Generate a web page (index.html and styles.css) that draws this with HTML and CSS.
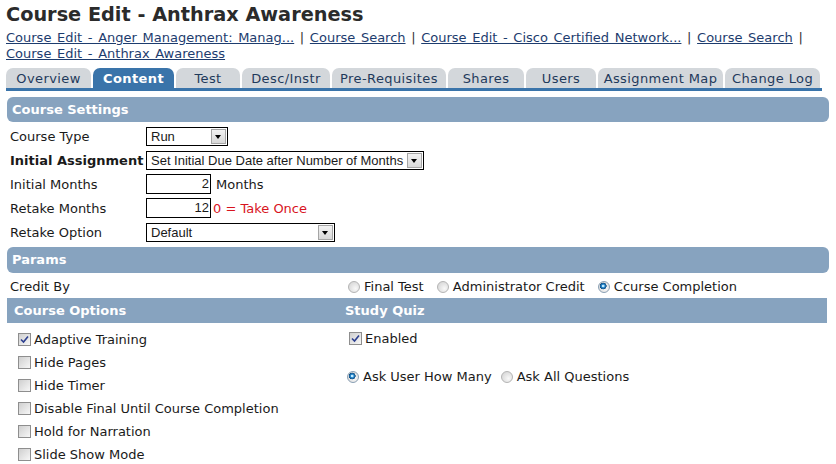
FILE: index.html
```html
<!DOCTYPE html>
<html lang="en">
<head>
  <meta charset="UTF-8" />
  <title>Course Edit - Anthrax Awareness</title>
  <link rel="stylesheet" href="styles.css">
</head>
<body>
  <div class="page">
    <h1 class="title">Course Edit - Anthrax Awareness</h1>

    <div class="crumbs">
      <a href="#">Course Edit - Anger Management: Manag...</a> |
      <a href="#">Course Search</a> |
      <a href="#">Course Edit - Cisco Certified Network...</a> |
      <a href="#">Course Search</a> |<br>
      <a href="#">Course Edit - Anthrax Awareness</a>
    </div>

    <ul class="tabs">
      <li>Overview</li>
      <li class="active">Content</li>
      <li>Test</li>
      <li>Desc/Instr</li>
      <li>Pre-Requisites</li>
      <li>Shares</li>
      <li>Users</li>
      <li>Assignment Map</li>
      <li>Change Log</li>
    </ul>

    <!-- course settings -->
    <div class="bar rounded">Course Settings</div>
    <div class="settings">
      <label>Course Type</label>
      <div class="field">
        <span class="select w-type"><span class="value">Run</span></span>
      </div>

      <label class="strong">Initial Assignment</label>
      <div class="field">
        <span class="select w-assign"><span class="value">Set Initial Due Date after Number of Months</span></span>
      </div>

      <label>Initial Months</label>
      <div class="field">
        <span class="num">2</span>
        <span class="unit">Months</span>
      </div>

      <label>Retake Months</label>
      <div class="field">
        <span class="num">12</span>
        <span class="hint">0 = Take Once</span>
      </div>

      <label>Retake Option</label>
      <div class="field">
        <span class="select w-option"><span class="value">Default</span></span>
      </div>
    </div>

    <!-- params -->
    <div class="bar rounded params-bar">Params</div>
    <div class="params">
      <div class="credit-label">Credit By</div>
      <div class="credit-opts">
        <span class="opt"><span class="radio"></span>Final Test</span>
        <span class="opt"><span class="radio"></span>Administrator Credit</span>
        <span class="opt"><span class="radio on"></span>Ccurse Completion</span>
      </div>

      <div class="bar sub left">Course Options</div>
      <div class="bar sub right">Study Quiz</div>

      <ul class="checks">
        <li><span class="check on"><svg viewBox="0 0 9 9" width="9" height="9"><path d="M1 4.5 L3.5 7 L8 1.5" fill="none" stroke="#2c3f8f" stroke-width="1.6"/></svg></span>Adaptive Training</li>
        <li><span class="check"></span>Hide Pages</li>
        <li><span class="check"></span>Hide Timer</li>
        <li><span class="check"></span>Disable Final Until Course Completion</li>
        <li><span class="check"></span>Hold for Narration</li>
        <li><span class="check"></span>Slide Show Mode</li>
      </ul>

      <div class="quiz">
        <div class="quiz-enabled"><span class="check on"><svg viewBox="0 0 9 9" width="9" height="9"><path d="M1 4.5 L3.5 7 L8 1.5" fill="none" stroke="#2c3f8f" stroke-width="1.6"/></svg></span>Enabled</div>
        <div class="quiz-mode">
          <span class="opt"><span class="radio on"></span>Ask User How Many</span>
          <span class="opt"><span class="radio"></span>Ask All Questions</span>
        </div>
      </div>
    </div>
  </div>
</body>
</html>
```

FILE: styles.css
```css
:root {
  --bar: #87a3bf;
  --tab: #d3d7db;
  --tab-active: #3a74aa;
  --link: #1d3c6e;
  --text: #1a1a1a;
}

* {
  box-sizing: border-box;
  margin: 0;
  padding: 0;
}

body {
  font-family: "DejaVu Sans", Verdana, sans-serif;
  font-size: 13px;
  color: var(--text);
  background: #fff;
}

.page {
  padding: 2px 7px 0 6px;
  width: 836px;
}

.title {
  font-size: 19.3px;
  font-weight: bold;
  color: #2b2b2b;
  line-height: 26px;
}

.crumbs {
  line-height: 16px;
  color: #333;
  margin-top: 2px;
  word-spacing: 1.5px;
}

.crumbs a {
  color: var(--link);
}

/* tabs */
.tabs {
  list-style: none;
  display: grid;
  grid-template-columns: 85px 81px 64px 88px 114px 76px 70px 125px 95px;
  gap: 2px;
  width: 816px;
  margin-top: 6px;
  border-bottom: 3px solid var(--tab-active);
}

.tabs li {
  height: 20px;
  line-height: 21px;
  text-align: center;
  background: var(--tab);
  color: #1f3a5c;
  border-radius: 7px 7px 0 0;
  letter-spacing: 0.4px;
  white-space: nowrap;
}

.tabs li.active {
  background: var(--tab-active);
  color: #fff;
  font-weight: bold;
}

/* header bars */
.bar {
  background: var(--bar);
  color: #fff;
  font-weight: bold;
  height: 25px;
  line-height: 25px;
  padding-left: 5px;
  margin-left: 1px;
}

.bar.rounded {
  border-radius: 6px;
  margin-top: 6px;
  width: 822px;
}

.params-bar {
  height: 26px;
  line-height: 26px;
  margin-top: 3px !important;
}

/* settings grid */
.settings {
  display: grid;
  grid-template-columns: 136px 1fr;
  grid-auto-rows: 24px;
  padding: 2px 0 0 4px;
}

.settings label {
  line-height: 25px;
}

.settings label.strong {
  font-weight: bold;
}

.field {
  display: flex;
  align-items: center;
}

.select {
  position: relative;
  display: inline-block;
  height: 19px;
  border: 1px solid #000;
  font-family: "Liberation Sans", Arial, sans-serif;
  font-size: 13px;
  line-height: 17px;
  background: #fff;
}

.select .value {
  padding-left: 4px;
}

.select::after {
  content: "";
  position: absolute;
  right: 1px;
  top: 1px;
  width: 15px;
  height: 15px;
  background: linear-gradient(#f2f2f2, #d8d8d8);
  border: 1px solid #a5a5a5;
  box-sizing: border-box;
}

.select::before {
  content: "";
  position: absolute;
  right: 6px;
  top: 7px;
  border-left: 3px solid transparent;
  border-right: 3px solid transparent;
  border-top: 4px solid #000;
  z-index: 1;
}

.w-type { width: 82px; }
.w-assign { width: 278px; }
.w-option { width: 189px; }

.num {
  display: inline-block;
  width: 65px;
  height: 20px;
  border: 1px solid #000;
  text-align: right;
  padding-right: 1px;
  font-family: "Liberation Sans", Arial, sans-serif;
  font-size: 13px;
  line-height: 18px;
}

.unit {
  margin-left: 5px;
}

.hint {
  margin-left: 2px;
  color: #d8141e;
}

/* params */
.params {
  display: grid;
  grid-template-columns: 333px 487px;
  margin-left: 1px;
}

.credit-label {
  height: 25px;
  line-height: 27px;
  padding-left: 3px;
}

.credit-opts {
  height: 25px;
  line-height: 27px;
  padding-left: 8px;
}

.opt {
  display: inline-flex;
  align-items: center;
  margin-right: 9px;
}

.radio {
  display: inline-block;
  width: 12px;
  height: 12px;
  border-radius: 50%;
  border: 1px solid #b4b4b4;
  background: radial-gradient(circle at 65% 65%, #f8f8f8, #d0d0d0);
  margin-right: 4px;
}

.radio.on {
  border-color: #8aa0b4;
  background:
    radial-gradient(circle at 42% 40%, #bfeaff 0 1px, #2a8ad0 1.6px, #0f4c80 3.2px, transparent 3.6px),
    radial-gradient(circle at 65% 65%, #f8f8f8, #d0d0d0);
}

.bar.sub {
  margin-left: 0;
}

.bar.sub.left {
  padding-left: 7px;
}

.bar.sub.right {
  padding-left: 5px;
}

.checks {
  list-style: none;
  padding: 5px 0 0 11px;
}

.checks li,
.quiz-enabled {
  display: flex;
  align-items: center;
  height: 23px;
}

.check {
  display: inline-flex;
  align-items: center;
  justify-content: center;
  width: 13px;
  height: 13px;
  border: 1px solid #8e8e8e;
  background: linear-gradient(135deg, #cfcfcf, #f7f7f7);
  margin-right: 3px;
}

.quiz {
  padding: 4px 0 0 9px;
}

.quiz-mode {
  margin-top: 15px;
  margin-left: -2px;
  height: 23px;
  display: flex;
  align-items: center;
}
```
